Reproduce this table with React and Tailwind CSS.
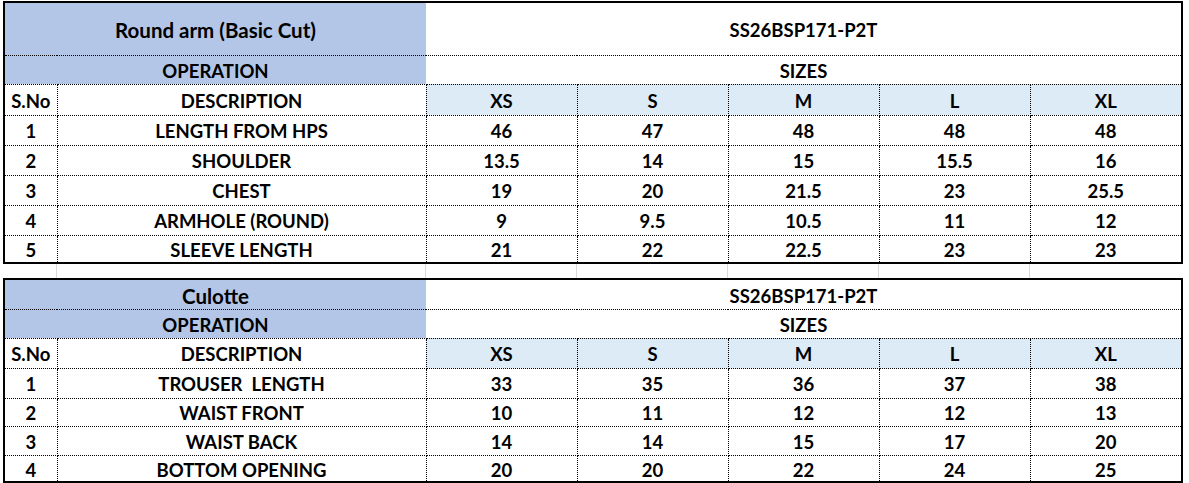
import React from "react";

const sizes = ["XS", "S", "M", "L", "XL"];

const top = {
  title: "Round arm (Basic Cut)",
  code: "SS26BSP171-P2T",
  heights: ["h-[53px]", "h-[29px]", "h-[31px]"],
  rowH: ["h-[30px]", "h-[30px]", "h-[30px]", "h-[30px]", "h-[28px]"],
  rows: [
    ["1", "LENGTH FROM HPS", "46", "47", "48", "48", "48"],
    ["2", "SHOULDER", "13.5", "14", "15", "15.5", "16"],
    ["3", "CHEST", "19", "20", "21.5", "23", "25.5"],
    ["4", "ARMHOLE (ROUND)", "9", "9.5", "10.5", "11", "12"],
    ["5", "SLEEVE LENGTH", "21", "22", "22.5", "23", "23"],
  ],
};

const bottom = {
  title: "Culotte",
  code: "SS26BSP171-P2T",
  heights: ["h-[30px]", "h-[29px]", "h-[30px]"],
  rowH: ["h-[30px]", "h-[28px]", "h-[29px]", "h-[27px]"],
  rows: [
    ["1", "TROUSER  LENGTH", "33", "35", "36", "37", "38"],
    ["2", "WAIST FRONT", "10", "11", "12", "12", "13"],
    ["3", "WAIST BACK", "14", "14", "15", "17", "20"],
    ["4", "BOTTOM OPENING", "20", "20", "22", "24", "25"],
  ],
};

const cell = "border border-dotted border-black text-center p-0 pt-[3px] leading-none";

function SizeTable({ data }) {
  return (
    <table className="table-fixed border-collapse border-2 border-solid border-black w-[1178px]">
      <colgroup>
        <col className="w-[53px]" />
        <col className="w-[369px]" />
        <col className="w-[151px]" />
        <col className="w-[151px]" />
        <col className="w-[151px]" />
        <col className="w-[151px]" />
        <col className="w-[152px]" />
      </colgroup>
      <tbody>
        <tr className={data.heights[0]}>
          <td colSpan={2} className={`${cell} border-r-0 bg-[#b4c6e7] text-[20.5px]`}>
            {data.title}
          </td>
          <td colSpan={5} className={`${cell} border-l-0`}>
            {data.code}
          </td>
        </tr>
        <tr className={data.heights[1]}>
          <td colSpan={2} className={`${cell} border-r-0 bg-[#b4c6e7]`}>
            OPERATION
          </td>
          <td colSpan={5} className={`${cell} border-l-0`}>
            SIZES
          </td>
        </tr>
        <tr className={data.heights[2]}>
          <td className={cell}>S.No</td>
          <td className={cell}>DESCRIPTION</td>
          {sizes.map((s) => (
            <td key={s} className={`${cell} bg-[#ddebf7]`}>
              {s}
            </td>
          ))}
        </tr>
        {data.rows.map((r, n) => (
          <tr key={r[0]} className={data.rowH[n]}>
            {r.map((v, i) => (
              <td key={i} className={`${cell} whitespace-pre`}>
                {v}
              </td>
            ))}
          </tr>
        ))}
      </tbody>
    </table>
  );
}

export default function App() {
  return (
    <div className="w-[1189px] h-[483px] overflow-hidden bg-white pt-[1px] pl-[3px] font-bold text-[18.5px] text-black font-['Lato',sans-serif]">
      <SizeTable data={top} />
      <div className="flex h-[14px] w-[1178px]">
        <div className="w-[54px] border-r border-[#d9d9d9]" />
        <div className="w-[369px] border-r border-[#d9d9d9]" />
        <div className="w-[151px] border-r border-[#d9d9d9]" />
        <div className="w-[151px] border-r border-[#d9d9d9]" />
        <div className="w-[151px] border-r border-[#d9d9d9]" />
        <div className="w-[151px] border-r border-[#d9d9d9]" />
      </div>
      <SizeTable data={bottom} />
    </div>
  );
}
